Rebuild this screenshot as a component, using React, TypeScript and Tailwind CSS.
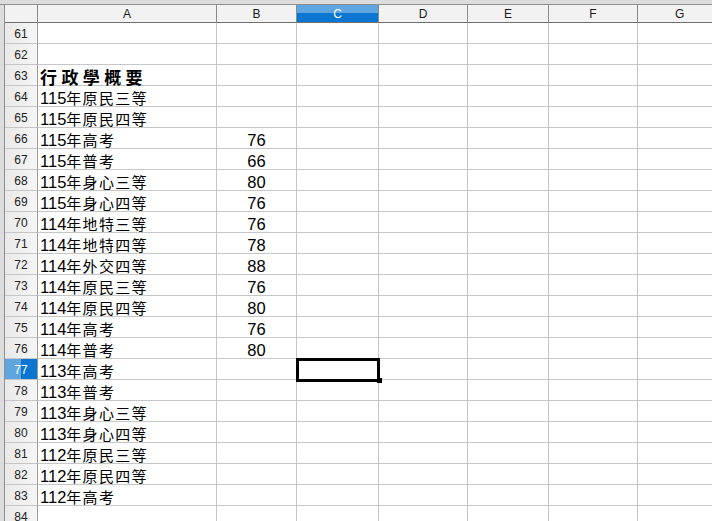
import React from "react";

type Row = { n: number; a?: string; b?: string; title?: boolean };

const rows: Row[] = [
  { n: 61 },
  { n: 62 },
  { n: 63, a: "行政學概要", title: true },
  { n: 64, a: "115|年原民三等" },
  { n: 65, a: "115|年原民四等" },
  { n: 66, a: "115|年高考", b: "76" },
  { n: 67, a: "115|年普考", b: "66" },
  { n: 68, a: "115|年身心三等", b: "80" },
  { n: 69, a: "115|年身心四等", b: "76" },
  { n: 70, a: "114|年地特三等", b: "76" },
  { n: 71, a: "114|年地特四等", b: "78" },
  { n: 72, a: "114|年外交四等", b: "88" },
  { n: 73, a: "114|年原民三等", b: "76" },
  { n: 74, a: "114|年原民四等", b: "80" },
  { n: 75, a: "114|年高考", b: "76" },
  { n: 76, a: "114|年普考", b: "80" },
  { n: 77, a: "113|年高考" },
  { n: 78, a: "113|年普考" },
  { n: 79, a: "113|年身心三等" },
  { n: 80, a: "113|年身心四等" },
  { n: 81, a: "112|年原民三等" },
  { n: 82, a: "112|年原民四等" },
  { n: 83, a: "112|年高考" },
  { n: 84 },
];

const sans = "font-['Liberation_Sans','Noto_Sans_CJK_TC',sans-serif]";

function CellA({ r }: { r: Row }) {
  if (!r.a) return null;
  if (r.title) {
    return (
      <div className="pl-[2px] leading-[24px] font-['Noto_Sans_CJK_TC',sans-serif] text-[17px] font-bold tracking-[4.4px] text-black whitespace-nowrap">
        {r.a}
      </div>
    );
  }
  const [num, rest] = r.a.split("|");
  return (
    <div className="pl-[2px] leading-[24px] whitespace-nowrap text-black">
      <span className={`${sans} text-[16.5px]`}>{num}</span>
      <span className="font-['Noto_Sans_CJK_TC',sans-serif] text-[15px] tracking-[1.3px]">{rest}</span>
    </div>
  );
}

const hdr =
  "shrink-0 bg-[#f2f2f2] border-r border-b border-r-[#8b8b8b] border-b-[#6f6f6f] flex items-center justify-center leading-none pt-[1px]";

export default function App() {
  return (
    <div className="w-[712px] h-[521px] overflow-hidden bg-[#dcdcdc] flex flex-col">
      <div className="h-[5px] shrink-0 border-b border-[#8f8f8f]" />
      <div className="flex flex-1 min-h-0">
        <div className="w-[5px] shrink-0 border-r border-[#8f8f8f]" />
        <div className="flex-1 flex flex-col bg-white min-w-0">
          {/* header */}
          <div className={`flex h-[18px] shrink-0 ${sans} text-[12px] text-[#1a1a1a]`}>
            <div className="w-[33px] shrink-0 bg-[#f2f2f2] border-r border-b border-r-[#8b8b8b] border-b-[#6f6f6f]" />
            <div className={`w-[179px] ${hdr}`}>A</div>
            <div className={`w-[80px] ${hdr}`}>B</div>
            <div className="w-[82px] shrink-0 bg-[linear-gradient(to_bottom,#5fa6e1_50%,#0a76d1_50%)] border-r border-b border-r-[#8b8b8b] border-b-[#6f6f6f] flex items-center justify-center leading-none pt-[1px] text-white">C</div>
            <div className={`w-[89px] ${hdr}`}>D</div>
            <div className={`w-[81px] ${hdr}`}>E</div>
            <div className={`w-[89px] ${hdr}`}>F</div>
            <div className="flex-1 min-w-[80px] bg-[#f2f2f2] border-b border-b-[#6f6f6f] flex items-center justify-start pl-[37px] leading-none pt-[1px]">G</div>
          </div>
          {rows.map((r) => {
            const sel = r.n === 77;
            return (
              <div key={r.n} className="flex h-[21px] shrink-0">
                <div
                  className={`w-[33px] shrink-0 border-r border-b border-r-[#9a9a9a] border-b-[#c6c6c6] flex items-center justify-center ${sans} text-[12px] leading-none pt-[1px] ${
                    sel
                      ? "bg-[linear-gradient(to_right,#5fa6e1_50%,#0a76d1_50%)] text-white"
                      : "bg-[linear-gradient(to_right,#e9e9e9,#f6f6f6)] text-[#222]"
                  }`}
                >
                  {r.n}
                </div>
                <div className="w-[179px] shrink-0 border-r border-b border-[#c6c6c6]">
                  <CellA r={r} />
                </div>
                <div className={`w-[80px] shrink-0 border-r border-b border-[#c6c6c6] text-center ${sans} text-[16.5px] leading-[24px] text-black`}>
                  {r.b ?? null}
                </div>
                <div className="relative w-[82px] shrink-0 border-r border-b border-[#c6c6c6]">
                  {sel && (
                    <>
                      <div className="absolute left-[-1px] top-[-1px] w-[84px] h-[24px] border-[3px] border-black z-10" />
                      <div className="absolute left-[80px] top-[19px] w-[5px] h-[5px] bg-black z-10" />
                    </>
                  )}
                </div>
                <div className="w-[89px] shrink-0 border-r border-b border-[#c6c6c6]" />
                <div className="w-[81px] shrink-0 border-r border-b border-[#c6c6c6]" />
                <div className="w-[89px] shrink-0 border-r border-b border-[#c6c6c6]" />
                <div className="flex-1 min-w-[80px] border-b border-[#c6c6c6]" />
              </div>
            );
          })}
        </div>
      </div>
    </div>
  );
}
